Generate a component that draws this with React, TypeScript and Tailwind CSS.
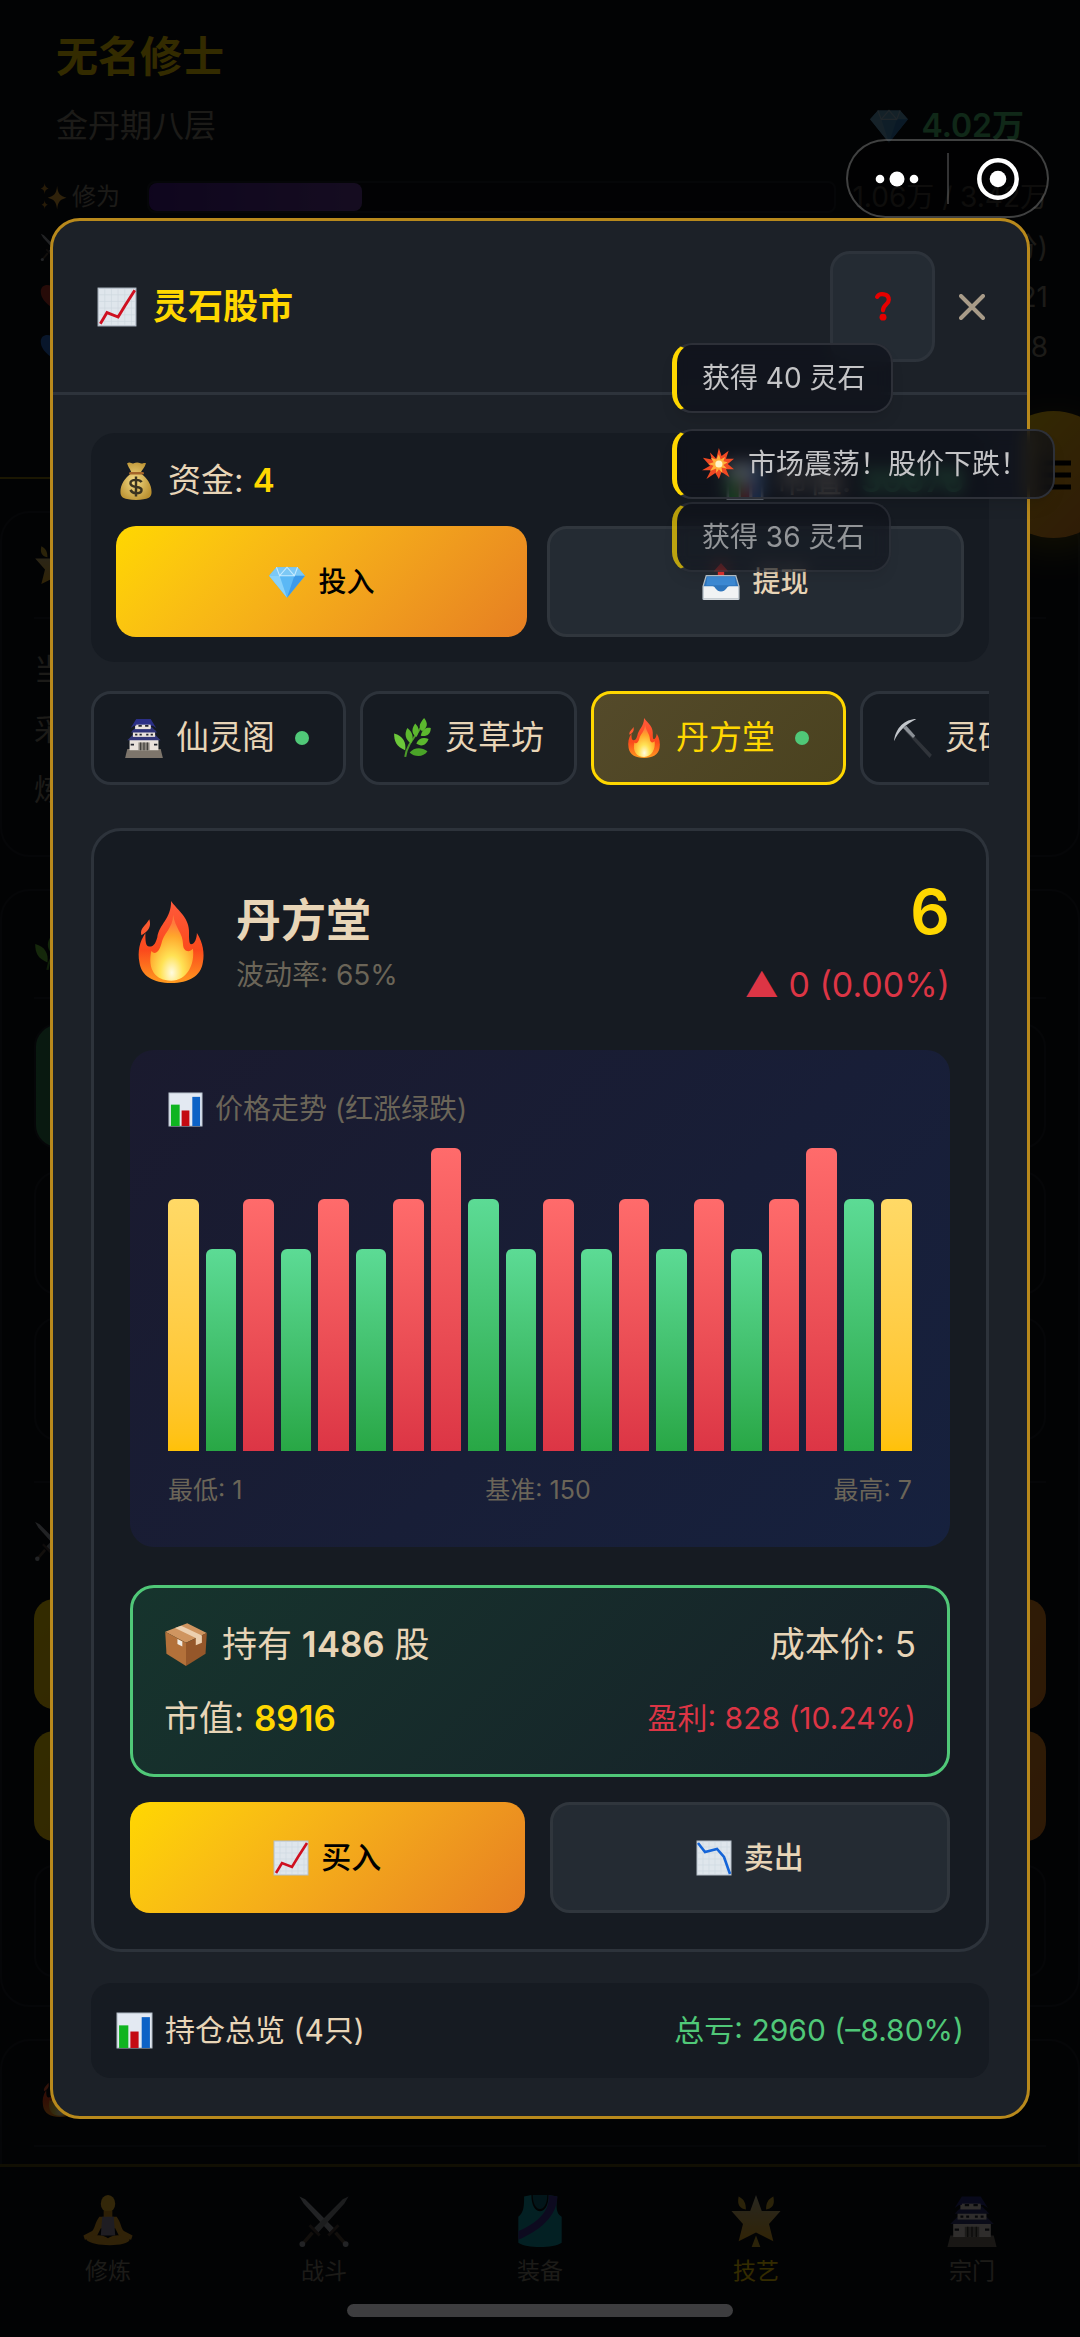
import type { ReactNode } from 'react';

interface IconProps {
  className?: string;
}

const ChartIcon = ({ className, down = false }: IconProps & { down?: boolean }) => (
  <svg viewBox="0 0 36 36" className={className} aria-hidden="true">
    <rect x="1" y="1" width="34" height="34" fill="#dfe6ec" stroke="#b4bec8" />
    <path d="M7 2v32M13 2v32M19 2v32M25 2v32M31 2v32M2 7h32M2 13h32M2 19h32M2 25h32M2 31h32" stroke="#cfd8e0" strokeWidth="0.6" />
    {down ? (
      <path d="M2 3l7 9 12-3 7 8 6 17" fill="none" stroke="#1565d8" strokeWidth="2.6" />
    ) : (
      <path d="M3 33l6-10 10 4 6-10 9-14" fill="none" stroke="#cf1020" strokeWidth="2.6" />
    )}
  </svg>
);

const BarsIcon = ({ className }: IconProps) => (
  <svg viewBox="0 0 36 36" className={className} aria-hidden="true">
    <rect x="1" y="1" width="34" height="34" fill="#e3e9f2" stroke="#b4bec8" />
    <rect x="3" y="13" width="9" height="22" fill="#10b420" />
    <rect x="14" y="19" width="8" height="16" fill="#c40a12" />
    <rect x="25" y="5" width="8" height="30" fill="#0d62c6" />
  </svg>
);

const MoneyBagIcon = ({ className }: IconProps) => (
  <svg viewBox="0 0 36 36" className={className} aria-hidden="true">
    <defs>
      <radialGradient id="bag" cx="0.45" cy="0.5" r="0.6">
        <stop offset="0" stopColor="#f5dc86" />
        <stop offset="1" stopColor="#b98f2f" />
      </radialGradient>
    </defs>
    <path d="M10 2c3-2 4 1 6 0s4-1 6 0 3-1 5 0c-1 4-4 6-5 9 6 4 10 10 10 17 0 5-3 7-14 7S4 33 4 28c0-7 4-13 10-17-1-4-3-5-4-9z" fill="url(#bag)" />
    <path d="M13 11h11" stroke="#a3652a" strokeWidth="2.4" strokeLinecap="round" />
    <path d="M23 19c-1-2-3-2-5-2-3 0-5 1-5 3 0 5 10 2 10 6 0 2-2 3-5 3s-4-1-5-3M18 14v18" fill="none" stroke="#3a3320" strokeWidth="2.2" />
  </svg>
);

const GemIcon = ({ className }: IconProps) => (
  <svg viewBox="0 0 36 36" className={className} aria-hidden="true">
    <path d="M8 4h20l7 8-17 21L1 12z" fill="#5bb8f5" />
    <path d="M8 4h20l7 8H1z" fill="#7cc8f5" />
    <path d="M1 12h10l7 21z" fill="#8ad2fa" />
    <path d="M25 12h10L18 33z" fill="#3d9ae8" />
    <path d="M8 4l3 8 7-8 7 8 3-8M11 12h14" fill="none" stroke="#c5eaff" strokeWidth="1" />
  </svg>
);

const OutboxIcon = ({ className }: IconProps) => (
  <svg viewBox="0 0 36 36" className={className} aria-hidden="true">
    <path d="M18 0l7 8h-4v7h-6V8h-4z" fill="#e3342f" />
    <path d="M4 12h28l3 11v11a1 1 0 0 1-1 1H2a1 1 0 0 1-1-1V23z" fill="#2f76bd" />
    <path d="M5 13h26l1 8H4z" fill="#3d8bd6" />
    <path d="M1 22h9c3 0 3 5 8 5s5-5 8-5h9v12a1 1 0 0 1-1 1H2a1 1 0 0 1-1-1z" fill="#f1f3f4" />
    <path d="M4 12h28l3 10v12H1V22z" fill="none" stroke="#b9c2c8" strokeWidth="1.2" />
  </svg>
);

const CastleIcon = ({ className }: IconProps) => (
  <svg viewBox="0 0 36 36" className={className} aria-hidden="true">
    <path d="M3 28h30l2 8H1z" fill="#7d756b" />
    <path d="M5 19h26v10H5z" fill="#e9e2dc" />
    <path d="M3 20l5-5h20l5 5z" fill="#34387a" />
    <path d="M8 11h20v6H8z" fill="#e9e2dc" />
    <path d="M6 13l5-5h14l5 5z" fill="#2e3278" />
    <path d="M10 5h14v5H10z" fill="#e9e2dc" />
    <path d="M6 9l5-8h13l5 8-3-2H9z" fill="#2b2f86" />
    <path d="M11 6h13v3H11z" fill="#e9e2dc" />
    <path d="M13 7h3M19 7h3M10 15h2M14 15h2M20 15h2M24 15h2M6 24h3M27 24h3" stroke="#22242e" strokeWidth="1.6" />
    <path d="M13 22h10v7H13z" fill="#8c8780" />
    <path d="M15 22v7M18 22v7M21 22v7" stroke="#3a3835" strokeWidth="1" />
  </svg>
);

const HerbIcon = ({ className }: IconProps) => (
  <svg viewBox="0 0 36 36" className={className} aria-hidden="true">
    <path d="M11 35c1-10 8-17 16-29" fill="none" stroke="#4c9a2a" strokeWidth="1.8" />
    <g fill="#5cb82e">
      <path d="M28 0c4 5 3 9-2 12-4-5-1-8 2-12z" />
      <path d="M34 9c0 6-4 8-9 7 1-6 5-8 9-7z" />
      <path d="M20 5c4 4 4 8 1 12-5-3-4-8-1-12z" />
      <path d="M13 9c5 4 6 9 3 14-5-4-6-9-3-14z" />
      <path d="M32 19c-2 6-7 7-11 4 2-5 7-6 11-4z" />
    </g>
    <path d="M1 14c8 2 11 8 10 15C3 26 1 21 1 14z" fill="#6cc83a" />
    <path d="M31 30c-4 6-12 5-16 1 4-5 11-5 16-1z" fill="#4aa428" />
  </svg>
);

const FlameIcon = ({ className }: IconProps) => (
  <svg viewBox="0 0 36 36" className={className} aria-hidden="true">
    <defs>
      <linearGradient id="flameOuter" x1="0" y1="0" x2="0" y2="1">
        <stop offset="0" stopColor="#ff5a3c" />
        <stop offset="0.6" stopColor="#fb4a1c" />
        <stop offset="1" stopColor="#ff9a1f" />
      </linearGradient>
      <radialGradient id="flameInner" cx="0.5" cy="0.88" r="0.75">
        <stop offset="0" stopColor="#fffbe0" />
        <stop offset="0.35" stopColor="#ffe255" />
        <stop offset="0.75" stopColor="#ffa62b" />
        <stop offset="1" stopColor="#ff7a3c" />
      </radialGradient>
    </defs>
    <g transform="translate(2.4 0) scale(0.87 1)">
      <path d="M18 0c2 3 9 7 9 13 0 3 0 6 1 6 2 0 3-3 3-5 3 4 4 9 3 13-1 6-7 9-16 9S3 33 2 27c-1-5 0-9 3-13 0 3 0 6 2 6 2 0 3-1 4-4 1-6 7-8 7-16z" fill="url(#flameOuter)" />
      <path d="M7 8c1 3 0 5-4 7-1-3 2-4 4-7z" fill="#fb5a30" />
      <path d="M19 6c1 6 5 8 5 13 0 3 3 4 5 2 1 7-3 14-11 14S6 30 8 22c2 2 4 0 5-3 1-5 6-7 6-13z" fill="url(#flameInner)" />
    </g>
  </svg>
);

const PickaxeIcon = ({ className }: IconProps) => (
  <svg viewBox="0 0 36 36" className={className} aria-hidden="true">
    <path d="M11 12l2-2 22 23-2 3z" fill="#30343a" />
    <path d="M9 9l3-2 8 9-2 2z" fill="#8b9096" />
    <path d="M21 1C11 1 2 9 1 21 5 12 11 6 21 1z" fill="#c3c7cc" />
  </svg>
);

const BoxIcon = ({ className }: IconProps) => (
  <svg viewBox="0 0 36 36" className={className} aria-hidden="true">
    <path d="M1 8L19 1l16 8-17 8z" fill="#cf9560" />
    <path d="M1 8l17 9v19L2 26z" fill="#b3713a" />
    <path d="M35 9l-17 8v19l16-10z" fill="#95572a" />
    <path d="M9 5l5-2 17 8v6l-5 2v-6z" fill="#ecd0b0" />
    <path d="M11 14l4 2v4l-4-2z" fill="#f0ece4" />
  </svg>
);

const BurstIcon = ({ className }: IconProps) => (
  <svg viewBox="0 0 36 36" className={className} aria-hidden="true">
    <path d="M19 0l3 9 8-6-3 9 9 0-7 6 7 6-9 0 4 9-9-6-3 8-4-7-10 7 5-10-10 0 9-5-8-9 10 2-2-8 7 7z" fill="#f04a24" />
    <path d="M19 7l2 6 5-3-2 5 5 1-5 3 4 4-6-1 1 6-4-4-3 4v-5l-7 3 4-6-6-2 6-2-3-5 6 2z" fill="#ffb03a" />
    <circle cx="19" cy="18" r="4" fill="#fff4c8" />
  </svg>
);

const SparklesIcon = ({ className }: IconProps) => (
  <svg viewBox="0 0 36 36" className={className} aria-hidden="true">
    <path d="M22 4c1 10 4 13 12 15-8 2-11 5-12 15-1-10-4-13-12-15 8-2 11-5 12-15z" fill="#e8a93a" />
    <path d="M6 0c0 4 2 6 5 7-3 1-5 3-5 7 0-4-2-6-5-7 3-1 5-3 5-7zM6 22c0 3 1 5 4 6-3 1-4 3-4 6 0-3-1-5-4-6 3-1 4-3 4-6z" fill="#c98c2a" />
  </svg>
);

const HeartIcon = ({ className }: IconProps) => (
  <svg viewBox="0 0 36 36" className={className} aria-hidden="true">
    <path d="M18 34C6 25 1 19 1 11 1 1 14 0 18 8c4-8 17-7 17 3 0 8-5 14-17 23z" fill="currentColor" />
  </svg>
);

const YogaIcon = ({ className }: IconProps) => (
  <svg viewBox="0 0 36 36" className={className} aria-hidden="true">
    <ellipse cx="18" cy="6" rx="5" ry="6" fill="#ffc02e" />
    <path d="M15 11h6v5h-6z" fill="#e09a20" />
    <path d="M12 15h12c3 4 3 8 5 10l6 3-1 3-8-2-3-6h-10l-3 6-8 2-1-3 6-3c2-2 2-6 5-10z" fill="#f0a828" />
    <path d="M14 15h8l1 13H13z" fill="#9a93a8" />
    <path d="M3 31c4-4 11-4 15-1 4-3 11-3 15 1-1 5-26 5-30 0z" fill="#f0a828" />
  </svg>
);

const SwordsIcon = ({ className }: IconProps) => (
  <svg viewBox="0 0 36 36" className={className} aria-hidden="true">
    <path d="M1 1l4 2 20 20-3 3L4 6z" fill="#aab0b8" />
    <path d="M35 1l-4 2L11 23l3 3L32 6z" fill="#8b9198" />
    <path d="M21 28l7-7M15 28l-7-7" stroke="#4a3f38" strokeWidth="2" />
    <path d="M26 26l6 7M10 26l-6 7" stroke="#5a4a3c" strokeWidth="2.4" />
    <circle cx="33" cy="34" r="2" fill="#aab0b8" />
    <circle cx="3" cy="34" r="2" fill="#aab0b8" />
  </svg>
);

const VestIcon = ({ className }: IconProps) => (
  <svg viewBox="0 0 36 36" className={className} aria-hidden="true">
    <path d="M7 1l5-1c0 15 12 15 12 0l6 1c-1 7-1 12 3 14v18c-6 4-24 4-30 0V15C7 12 7 7 7 1z" fill="#129fb0" />
    <path d="M13 0h10c0 13-10 13-10 0z" fill="#0b6c7c" />
    <path d="M24 0l6 1c0 14-13 24-27 30v-6C15 20 25 12 24 0z" fill="#40369a" />
  </svg>
);

const StarIcon = ({ className }: IconProps) => (
  <svg viewBox="0 0 36 36" className={className} aria-hidden="true">
    <defs>
      <linearGradient id="star" x1="0" y1="0" x2="0" y2="1">
        <stop offset="0" stopColor="#c9c3a0" />
        <stop offset="1" stopColor="#f0b020" />
      </linearGradient>
    </defs>
    <path d="M18 0l4 11h13l-8 9 3 12-12-6-12 6 3-12-8-9h13z" fill="url(#star)" strokeLinejoin="round" />
    <path d="M6 1c4 2 5 5 5 9-5-1-6-4-5-9zM30 1c-4 2-5 5-5 9 5-1 6-4 5-9zM18 28l3 8h-6z" fill="#d8ae30" />
  </svg>
);

const navItems = [
  { label: '修炼', icon: YogaIcon },
  { label: '战斗', icon: SwordsIcon },
  { label: '装备', icon: VestIcon },
  { label: '技艺', icon: StarIcon, active: true },
  { label: '宗门', icon: CastleIcon },
];

const stocks = [
  { name: '仙灵阁', icon: CastleIcon, held: true },
  { name: '灵草坊', icon: HerbIcon, held: false },
  { name: '丹方堂', icon: FlameIcon, held: true },
  { name: '灵矿山', icon: PickaxeIcon, held: true },
];

const prices = [6, 5, 6, 5, 6, 5, 6, 7, 6, 5, 6, 5, 6, 5, 6, 5, 6, 7, 6, 6];
const minPrice = 1;
const maxPrice = 7;

const toasts = [
  { text: '获得 40 灵石', className: '' },
  { text: '市场震荡！股价下跌！', burst: true, className: 'mt-4' },
  { text: '获得 36 灵石', className: 'mt-[3px] opacity-70' },
];

const barColor = (index: number) => {
  const prev = prices[index - 1];
  if (prev === undefined || prices[index] === prev) return 'from-[#ffd966] to-[#ffc107]';
  return prices[index] > prev ? 'from-[#ff6b6b] to-[#dc3545]' : 'from-[#5cdb95] to-[#28a745]';
};

const ActionButton = ({ primary = false, children }: { primary?: boolean; children: ReactNode }) => (
  <button
    className={`flex h-[111px] flex-1 items-center justify-center gap-3 rounded-[20px] font-medium ${
      primary
        ? 'bg-linear-135 from-[#ffd700] to-[#e67e22] text-black'
        : 'border-3 border-[#30363d] bg-[#242b33] text-[#e8d5b7]'
    }`}
  >
    {children}
  </button>
);

const GamePage = () => (
  <div className="flex min-h-screen flex-col bg-[#0d1117] text-[#8b8578]">
    <header className="border-b-2 border-[#ffd700]/50 pt-[26px] pb-[105px]">
      <div className="px-14">
        <h1 className="text-[42px] leading-[62px] font-bold text-[#ffd700]">无名修士</h1>
        <div className="mt-2 flex h-[60px] items-center justify-between text-[32px]">
          <span>金丹期八层</span>
          <span className="flex items-center gap-3 font-semibold text-[#50c878]">
            <GemIcon className="size-10 opacity-80" />
            4.02万
          </span>
        </div>
      </div>
      <div className="mt-4 pr-8 pl-10 text-[28px]">
        <div className="flex h-[50px] items-center">
          <SparklesIcon className="size-7" />
          <span className="ml-1 text-2xl">修为</span>
          <div className="mr-4 ml-[27px] h-8 flex-1 rounded-lg border-2 border-[#1c2128] bg-[#0a0d14]">
            <div className="h-full w-[31%] rounded-lg bg-linear-to-r from-[#4b1d95] to-[#6b3fa0]" />
          </div>
          <span className="whitespace-nowrap">1.06万 / 3.42万</span>
        </div>
        <div className="flex h-[50px] items-center justify-between">
          <SwordsIcon className="size-7" />
          <span>(3分)</span>
        </div>
        <div className="flex h-[50px] items-center justify-between">
          <HeartIcon className="size-7 text-[#c0392b]" />
          <span>21 / 21</span>
        </div>
        <div className="flex h-[50px] items-center justify-between">
          <HeartIcon className="size-7 text-[#2a6fd6]" />
          <span>78 / 78</span>
        </div>
      </div>
    </header>

    <section className="mt-8 rounded-[30px] border-2 border-[#1c2128] px-8 pt-7 pb-9 text-[30px] leading-[60px]">
      <div className="mb-5 flex h-[78px] items-start border-b-2 border-[#1c2128]">
        <StarIcon className="mt-1 size-11" />
      </div>
      <p>当前技艺</p>
      <p>采集灵草</p>
      <p>炼制丹药</p>
    </section>

    <section className="mt-8 rounded-[30px] border-2 border-[#1c2128] px-8 pt-8 pb-7">
      <div className="flex h-[76px] items-start border-b-2 border-[#1c2128]">
        <HerbIcon className="mt-1 size-11" />
      </div>
      <div className="mt-6 h-[126px] rounded-3xl border-2 border-[#1c2128] bg-linear-to-r from-[#2f8050] to-transparent to-50%" />
      <div className="mt-[22px] h-[124px] rounded-3xl border-2 border-[#1c2128]" />
      <div className="mt-[22px] h-[124px] rounded-3xl border-2 border-[#1c2128]" />
      <div className="mt-10 flex h-[118px] items-center border-t-2 border-[#1c2128]">
        <SwordsIcon className="size-10" />
      </div>
      <div className="h-[110px] rounded-[20px] bg-linear-135 from-[#ffd700] to-[#e67e22]" />
      <div className="mt-[22px] h-[110px] rounded-[20px] bg-linear-135 from-[#ffd700] to-[#e67e22]" />
      <div className="mt-6 h-[112px] rounded-[20px] border-2 border-[#1c2128]" />
    </section>

    <section className="mt-8 flex-1 rounded-t-[30px] border-2 border-b-0 border-[#1c2128] px-8 pt-8">
      <div className="flex h-[74px] items-start border-b-2 border-[#1c2128]">
        <FlameIcon className="ml-1 size-11" />
      </div>
    </section>

    <nav className="grid grid-cols-5 border-t-3 border-[#ffd700]/30 bg-[#0d1117] pt-7 pb-12 text-[23px] leading-9">
      {navItems.map(({ label, icon: Icon, active }) => (
        <a key={label} href="#" className={`flex flex-col items-center gap-1.5 ${active ? 'text-[#ffd700]' : ''}`}>
          <Icon className="size-[52px]" />
          {label}
        </a>
      ))}
    </nav>
  </div>
);

const PriceChart = () => (
  <div className="mt-[33px] rounded-3xl bg-linear-135 from-[#1a1a2e] to-[#16213e] p-[38px] text-[#6b6558]">
    <div className="flex items-center gap-3 text-[28px] leading-[42px]">
      <BarsIcon className="size-[35px]" />
      价格走势 (红涨绿跌)
    </div>
    <div className="mt-[18px] flex h-[303px] items-end gap-[7px]">
      {prices.map((price, index) => (
        <div
          key={index}
          className={`flex-1 rounded-t-md bg-linear-to-b ${barColor(index)}`}
          style={{ height: `${((price - minPrice) / (maxPrice - minPrice)) * 100}%` }}
        />
      ))}
    </div>
    <div className="mt-5 flex justify-between text-[25px] leading-[38px]">
      <span>最低: 1</span>
      <span>基准: 150</span>
      <span>最高: 7</span>
    </div>
  </div>
);

const StockModal = () => (
  <div role="dialog" aria-label="灵石股市" className="mx-[50px] flex-1 rounded-[30px] border-3 border-[#b8891c] bg-[#1c2128] text-[#e8d5b7]">
    <div className="flex items-center border-b-3 border-[#2d333b] py-[30px] pr-[42px] pl-11">
      <h2 className="flex items-center gap-4 text-[35px] font-bold text-[#ffd700]">
        <ChartIcon className="size-10" />
        灵石股市
      </h2>
      <button
        aria-label="帮助"
        className="ml-auto flex h-[111px] w-[105px] items-center justify-center rounded-[20px] border-3 border-[#2d333b] bg-[#242b33]"
      >
        <svg viewBox="0 0 16 30" className="h-[29px] w-4" fill="none" aria-hidden="true">
          <path d="M2 5c2-4 12-4 12 3 0 5-6 5-6 11" stroke="#e60000" strokeWidth="4.4" strokeLinecap="round" />
          <circle cx="8" cy="26" r="3.6" fill="#e60000" />
        </svg>
      </button>
      <button aria-label="关闭" className="ml-6">
        <svg viewBox="0 0 26 26" className="size-[26px]" aria-hidden="true">
          <path d="M2 2l22 22M24 2L2 24" stroke="#a89b88" strokeWidth="4" strokeLinecap="round" />
        </svg>
      </button>
    </div>

    <div className="px-[38px] pt-[38px] pb-[38px]">
      <div className="rounded-3xl bg-[#161b22] p-[25px] pt-6">
        <div className="mb-[21px] flex h-12 items-center justify-between text-[33px]">
          <span className="flex items-center gap-3">
            <MoneyBagIcon className="size-[40px]" />
            <span>
              资金: <strong className="font-semibold text-[#ffd700]">4</strong>
            </span>
          </span>
          <span className="flex items-center gap-3">
            <BarsIcon className="size-[38px]" />
            <span>
              市值: <strong className="font-semibold text-[#50c878]">30676</strong>
            </span>
          </span>
        </div>
        <div className="flex gap-5 text-[28px]">
          <ActionButton primary>
            <GemIcon className="size-[38px]" />
            投入
          </ActionButton>
          <ActionButton>
            <OutboxIcon className="size-[38px]" />
            提现
          </ActionButton>
        </div>
      </div>

      <div role="tablist" className="mt-[29px] flex gap-3.5 overflow-hidden">
        {stocks.map(({ name, icon: Icon, held }, index) => (
          <button
            key={name}
            role="tab"
            aria-selected={index === 2}
            className={`flex h-[94px] shrink-0 items-center rounded-[20px] border-3 px-[30px] text-[33px] ${
              index === 2
                ? 'border-[#ffd700] bg-linear-135 from-[#544a2a] to-[#4a421f] text-[#ffd700]'
                : 'border-[#2d333b] bg-[#161b22]'
            }`}
          >
            <Icon className="size-10" />
            <span className="ml-3">{name}</span>
            {held && <span className="mr-1 ml-5 size-3.5 rounded-full bg-[#50c878]" />}
          </button>
        ))}
      </div>

      <section className="mt-[43px] rounded-[30px] border-3 border-[#2d333b] bg-[#161b22] p-9">
        <div className="flex h-[150px] items-center justify-between">
          <div className="flex items-center gap-6">
            <FlameIcon className="size-[82px]" />
            <div className="pt-1.5">
              <h3 className="text-[45px] leading-[60px] font-bold">丹方堂</h3>
              <p className="text-[28px] leading-[48px] text-[#6b6558]">波动率: 65%</p>
            </div>
          </div>
          <div className="self-start text-right">
            <div className="text-[62px] leading-[90px] font-semibold text-[#ffd700]">6</div>
            <div className="text-[34px] leading-[56px] text-[#dc3545]">▲ 0 (0.00%)</div>
          </div>
        </div>

        <PriceChart />

        <div className="mt-[38px] flex flex-col gap-3 rounded-3xl border-3 border-[#50c878] bg-linear-135 from-[#16342d] to-[#162028] px-[31px] py-[25px] text-[35px] leading-[62px]">
          <div className="flex items-center justify-between">
            <span className="flex items-center gap-3.5">
              <BoxIcon className="size-[44px]" />
              <span>
                持有 <strong className="font-semibold">1486</strong> 股
              </span>
            </span>
            <span>成本价: 5</span>
          </div>
          <div className="flex items-center justify-between">
            <span>
              市值: <strong className="font-semibold text-[#ffd700]">8916</strong>
            </span>
            <span className="text-[30px] text-[#dc3545]">盈利: 828 (10.24%)</span>
          </div>
        </div>

        <div className="mt-[25px] flex gap-[25px] text-[30px]">
          <ActionButton primary>
            <ChartIcon className="size-9" />
            买入
          </ActionButton>
          <ActionButton>
            <ChartIcon className="size-9" down />
            卖出
          </ActionButton>
        </div>
      </section>

      <div className="mt-[31px] flex h-[95px] items-center justify-between rounded-[20px] bg-[#161b22] px-[25px] text-[30px]">
        <span className="flex items-center gap-3">
          <BarsIcon className="size-[37px]" />
          持仓总览 (4只)
        </span>
        <span className="text-[#50c878]">总亏: 2960 (–8.80%)</span>
      </div>
    </div>
  </div>
);

const App = () => (
  <div className="relative min-h-screen overflow-hidden font-['Inter','Noto_Sans_CJK_SC',sans-serif]">
    <GamePage />

    <button
      aria-label="菜单"
      className="absolute top-[411px] -right-[37px] flex size-[127px] items-center justify-center rounded-full bg-linear-135 from-[#ffd700] to-[#e67e22] shadow-[0_12px_36px_rgba(255,215,0,0.3)]"
    >
      <svg viewBox="0 0 34 30" className="h-[30px] w-[34px]" aria-hidden="true">
        <path d="M0 3h34M0 15h34M0 27h34" stroke="#000" strokeWidth="5" />
      </svg>
    </button>

    <div className="absolute inset-0 flex items-center bg-black/80">
      <StockModal />
    </div>

    <div className="absolute top-[343px] right-[25px] flex flex-col items-start text-[28px] text-[#c4c4c6]">
      {toasts.map(({ text, burst, className }) => (
        <div
          key={text}
          className={`flex h-[70px] items-center gap-3.5 rounded-[20px] border-2 border-l-5 border-[#2d3038] border-l-[#ffd700] bg-[#0d1018]/70 px-[25px] whitespace-nowrap shadow-lg backdrop-blur-sm ${className}`}
        >
          {burst && <BurstIcon className="size-8" />}
          {text}
        </div>
      ))}
    </div>

    <div className="absolute top-[139px] right-[31px] flex h-[79px] w-[203px] items-center rounded-full border-2 border-white/25 bg-black/50">
      <button aria-label="更多" className="flex flex-1 justify-center">
        <svg viewBox="0 0 44 16" className="h-4 w-11" fill="#fff" aria-hidden="true">
          <circle cx="5" cy="8" r="4.3" />
          <circle cx="22" cy="8" r="7.5" />
          <circle cx="39" cy="8" r="4.3" />
        </svg>
      </button>
      <span className="h-[51px] w-0.5 bg-white/20" />
      <button aria-label="退出" className="flex flex-1 justify-center">
        <svg viewBox="0 0 42 42" className="size-[42px]" aria-hidden="true">
          <circle cx="21" cy="21" r="18.7" fill="none" stroke="#fff" strokeWidth="4.5" />
          <circle cx="21" cy="21" r="8.3" fill="#fff" />
        </svg>
      </button>
    </div>

    <div className="absolute inset-x-0 bottom-5 mx-auto h-[13px] w-[386px] rounded-full bg-[#3d3d3f]" />
  </div>
);

export default App;
